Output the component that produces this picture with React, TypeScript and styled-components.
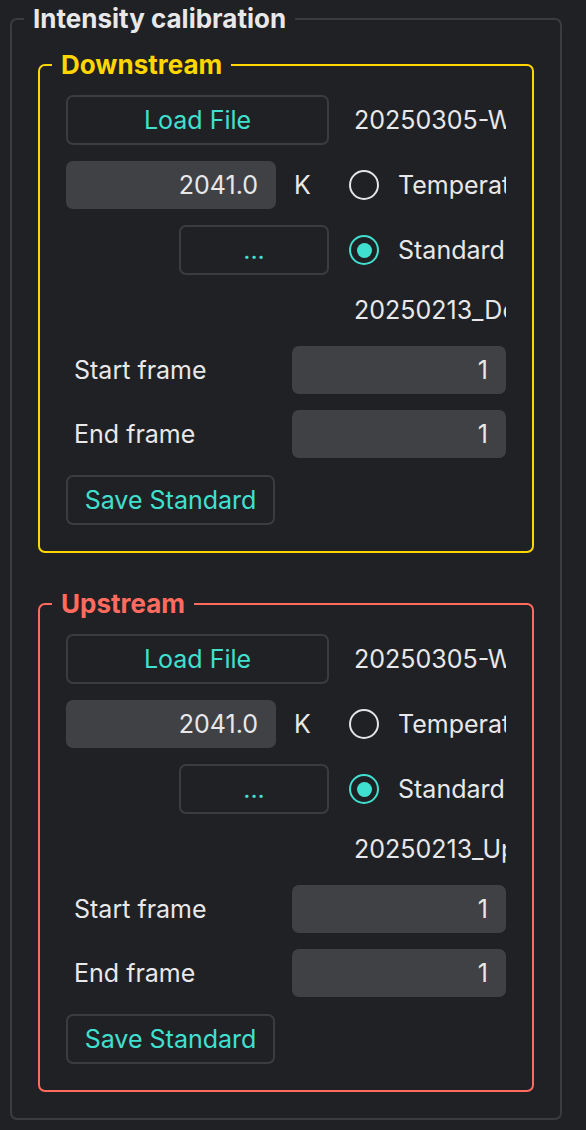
import styled, { createGlobalStyle } from "styled-components"

const GlobalStyle = createGlobalStyle`
    html, body {
        margin: 0;
        padding: 0;
        background: #202124;
    }
    body {
        font-family: Inter, "Noto Sans", sans-serif;
        color: #e8e8ea;
    }
`

const Page = styled.div`
    padding: 4px 0 0 10px;
    width: 586px;
    height: 1130px;
    box-sizing: border-box;
`

const Group = styled.fieldset<{ $color: string }>`
    margin: 0;
    box-sizing: border-box;
    border: 2px solid ${p => p.$color};
    border-radius: 7px;
    padding: 15px 26px 26px 26px;
    min-width: 0;
`

const Outer = styled(Group)`
    width: 552px;
    padding-top: 16px;
    padding-bottom: 26px;
`

const Inner = styled(Group)`
    width: 496px;
    & + & {
        margin-top: 36px;
    }
`

const Legend = styled.legend<{ $color: string }>`
    margin-left: -14px;
    padding: 0 9px;
    font-size: 26px;
    line-height: 30px;
    font-weight: 700;
    color: ${p => p.$color};
`

const Grid = styled.div`
    display: grid;
    grid-template-columns: 210px 53px 177px;
    row-gap: 16px;
    align-items: center;
`

const Frames = styled.div`
    display: grid;
    grid-template-columns: 214px 214px;
    column-gap: 12px;
    row-gap: 16px;
    margin-top: 16px;
    align-items: center;
`

const Button = styled.button<{ $span?: string; $width?: string }>`
    grid-column: ${p => p.$span || "auto"};
    justify-self: ${p => (p.$width ? "end" : "stretch")};
    width: ${p => p.$width || "auto"};
    height: 50px;
    box-sizing: border-box;
    background: transparent;
    border: 2px solid #3b3c40;
    border-radius: 7px;
    color: #40e0d0;
    font-family: Inter, "Noto Sans", sans-serif;
    font-size: 25px;
    padding: 0 12px;
    margin: 0;
    white-space: nowrap;
`

const SaveButton = styled(Button)`
    justify-self: start;
    margin-top: 17px;
    width: 209px;
`

const NumberBox = styled.div`
    height: 48px;
    box-sizing: border-box;
    background: #404144;
    border-radius: 7px;
    display: flex;
    align-items: center;
    justify-content: flex-end;
    padding-right: 18px;
    font-size: 25px;
    color: #e8e8ea;
`

const Unit = styled.div`
    text-align: center;
    font-size: 25px;
`

const Cell = styled.div<{ $pad: number; $tall?: boolean }>`
    overflow: hidden;
    white-space: nowrap;
    padding-left: ${p => p.$pad}px;
    font-size: 25px;
    line-height: ${p => (p.$tall ? 39 : 37)}px;
`

const RadioRow = styled.div`
    display: flex;
    align-items: center;
    gap: 19px;
    padding-left: 20px;
    overflow: hidden;
    white-space: nowrap;
    font-size: 25px;
`

const Radio = styled.span<{ $on?: boolean }>`
    flex: none;
    width: 30px;
    height: 30px;
    box-sizing: border-box;
    border-radius: 50%;
    border: 2.5px solid ${p => (p.$on ? "#40e0d0" : "#e4e4e6")};
    display: flex;
    align-items: center;
    justify-content: center;
    &::after {
        content: "";
        width: 15px;
        height: 15px;
        border-radius: 50%;
        background: ${p => (p.$on ? "#40e0d0" : "transparent")};
    }
`

const Label = styled.div`
    padding-left: 8px;
    font-size: 25px;
`

function Calibration({ name, color, standard }: { name: string; color: string; standard: string }) {
    return (
        <Inner $color={color}>
            <Legend $color={color}>{name}</Legend>
            <Grid>
                <Button $span="1 / 3">Load File</Button>
                <Cell $pad={25}>20250305-W1_Temperature</Cell>

                <NumberBox>2041.0</NumberBox>
                <Unit>K</Unit>
                <RadioRow>
                    <Radio />
                    <span>Temperature</span>
                </RadioRow>

                <Button $span="1 / 3" $width="150px">...</Button>
                <RadioRow>
                    <Radio $on />
                    <span>Standard</span>
                </RadioRow>

                <span />
                <span />
                <Cell $pad={25} $tall>{standard}</Cell>
            </Grid>
            <Frames>
                <Label>Start frame</Label>
                <NumberBox>1</NumberBox>
                <Label>End frame</Label>
                <NumberBox>1</NumberBox>
            </Frames>
            <SaveButton>Save Standard</SaveButton>
        </Inner>
    )
}

export default function App() {
    return (
        <Page>
            <GlobalStyle />
            <Outer $color="#3b3c40">
                <Legend $color="#e8e8ea">Intensity calibration</Legend>
                <Calibration name="Downstream" color="#ffd700" standard="20250213_Downstream" />
                <Calibration name="Upstream" color="#ff6b5e" standard="20250213_Upstream" />
            </Outer>
        </Page>
    )
}
